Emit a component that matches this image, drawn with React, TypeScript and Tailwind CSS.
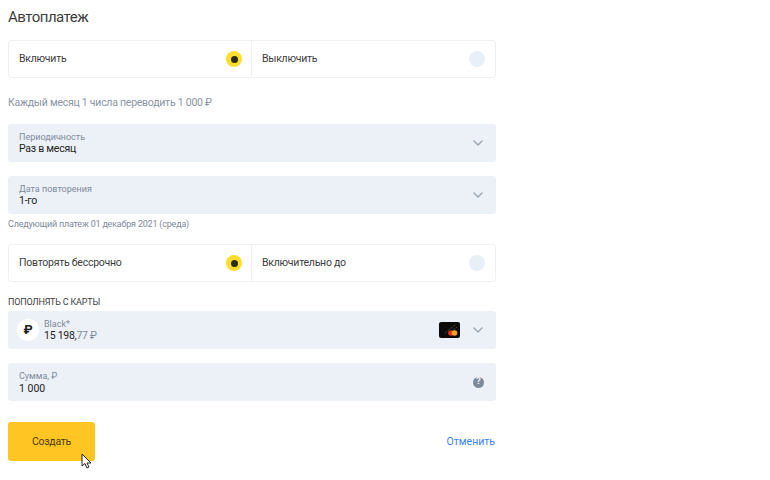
import { ChevronDown } from 'lucide-react';

const font = { fontFamily: 'Roboto, sans-serif' };

function Radio({ on }: { on: boolean }) {
  if (on) {
    return (
      <span className="flex size-4 items-center justify-center rounded-full bg-[#ffdd2d]">
        <span className="size-[7px] rounded-full bg-[#2b2b1a]" />
      </span>
    );
  }
  return <span className="size-4 rounded-full bg-[#e9eff7]" />;
}

function Segmented({ left, right }: { left: string; right: string }) {
  return (
    <div className="flex h-[38px] w-[488px] rounded-[3px] border border-[#eef0f3]">
      <div className="flex w-[243px] items-center justify-between border-r border-[#eef0f3] pl-[10px] pr-[9px] text-[10.5px] tracking-[-0.25px] text-[#3d3d3d]">
        {left}
        <Radio on />
      </div>
      <div className="flex flex-1 items-center justify-between pl-[10px] pr-[10px] text-[10.5px] tracking-[-0.25px] text-[#3d3d3d]">
        {right}
        <Radio on={false} />
      </div>
    </div>
  );
}

function Select({ label, value }: { label: string; value: string }) {
  return (
    <div className="flex h-[38px] w-[488px] items-center justify-between rounded-[3px] bg-[#ecf1f7] pl-[11px] pr-[10px]">
      <div className="flex flex-col pb-px">
        <span className="text-[9px] leading-[12px] text-[#7f8a99]">{label}</span>
        <span className="text-[10.5px] leading-[12px] tracking-[-0.25px] text-[#222]">{value}</span>
      </div>
      <ChevronDown className="size-4 text-[#9aa3b0]" strokeWidth={2} />
    </div>
  );
}

function CardThumb() {
  return (
    <svg width="21" height="16" viewBox="0 0 21 16">
      <rect width="21" height="16" rx="2" fill="#0b0b0b" />
      <path d="M6 11L17 2M9 12L18 5" stroke="#6b5a40" strokeWidth="1" strokeDasharray="1 1" />
      <circle cx="12" cy="11" r="2.8" fill="#e3301f" />
      <circle cx="15.5" cy="11" r="2.8" fill="#f7a41c" />
    </svg>
  );
}

export default function App() {
  return (
    <div className="h-[480px] w-[770px] overflow-hidden bg-white pl-2" style={font}>
      <h1 className="pt-[7px] text-[15px] leading-[20px] font-normal tracking-[-0.5px] text-[#3d3d3d]">Автоплатеж</h1>
      <div className="mt-[13px]">
        <Segmented left="Включить" right="Выключить" />
      </div>
      <p className="mt-[18px] text-[10.5px] leading-[14px] tracking-[-0.25px] text-[#8b94a3]">Каждый месяц 1 числа переводить 1 000 ₽</p>
      <div className="mt-[14px]">
        <Select label="Периодичность" value="Раз в месяц" />
      </div>
      <div className="mt-[14px]">
        <Select label="Дата повторения" value="1-го" />
      </div>
      <p className="mt-1 text-[9px] leading-[12px] tracking-[-0.2px] text-[#7f8a99]">Следующий платеж 01 декабря 2021 (среда)</p>
      <div className="mt-[14px]">
        <Segmented left="Повторять бессрочно" right="Включительно до" />
      </div>
      <p className="mt-[14px] text-[9px] leading-[12px] tracking-[-0.2px] text-[#3d3d3d]">ПОПОЛНЯТЬ С КАРТЫ</p>
      <div className="mt-[3px] flex h-[38px] w-[488px] items-center rounded-[3px] bg-[#ecf1f7] pl-[9px] pr-[10px]">
        <span className="flex size-[22px] items-center justify-center rounded-full bg-white text-[13px] font-bold text-[#222]">₽</span>
        <div className="ml-[5px] flex flex-1 flex-col pb-px">
          <span className="text-[9px] leading-[12px] text-[#7f8a99]">Black*</span>
          <span className="text-[10.5px] leading-[12px] tracking-[-0.25px] text-[#222]">
            15 198,<span className="text-[#7f8a99]">77 ₽</span>
          </span>
        </div>
        <CardThumb />
        <ChevronDown className="ml-[10px] size-4 text-[#9aa3b0]" strokeWidth={2} />
      </div>
      <div className="mt-[14px] flex h-[38px] w-[488px] items-center justify-between rounded-[3px] bg-[#ecf1f7] pl-[11px] pr-[12px]">
        <div className="flex flex-col">
          <span className="text-[9px] leading-[12px] text-[#7f8a99]">Сумма, ₽</span>
          <span className="text-[10.5px] leading-[13px] text-[#222]">1 000</span>
        </div>
        <span className="flex size-[11px] items-center justify-center rounded-full bg-[#7f8a99] text-[9px] font-bold text-[#ecf1f7]">?</span>
      </div>
      <div className="mt-[21px] flex w-[488px] items-center justify-between">
        <div className="relative">
          <button className="h-[39px] w-[87px] rounded-[3px] bg-[#ffc522] text-[10.5px] tracking-[-0.25px] text-[#4a3c10]">Создать</button>
          <svg className="absolute left-[73px] top-[31px]" width="12" height="16" viewBox="0 0 12 16">
            <path d="M1 1V13L4 10.5L6 15L8 14L6 10H10Z" fill="#fff" stroke="#222" strokeWidth="1" strokeLinejoin="round" />
          </svg>
        </div>
        <a className="pr-px text-[10.5px] text-[#3b82f6]">Отменить</a>
      </div>
    </div>
  );
}
